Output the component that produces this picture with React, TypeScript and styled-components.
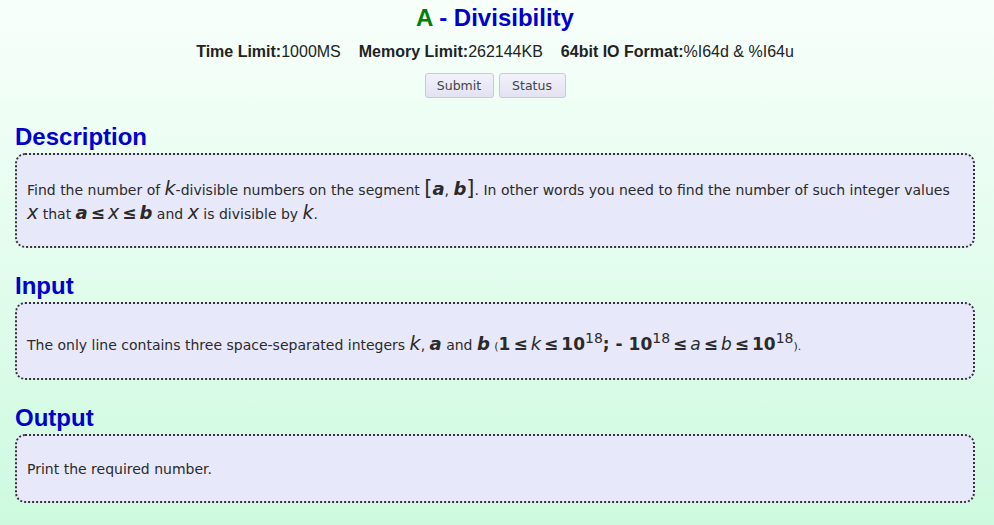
import React from 'react'
import styled, { createGlobalStyle } from 'styled-components'

const GlobalStyle = createGlobalStyle`
  html, body {
    margin: 0;
    padding: 0;
  }
  body {
    min-height: 525px;
    background: linear-gradient(to bottom, #f8fffb 0%, #cdfadf 100%);
    font-family: "DejaVu Sans", Verdana, sans-serif;
    color: #222;
  }
`

const Page = styled.div`
  padding: 0 19px 0 15px;
  min-height: 525px;
  box-sizing: border-box;
`

const Header = styled.div`
  text-align: center;
  padding-top: 4px;
`

const Title = styled.h1`
  margin: 0;
  font-family: "Liberation Sans", Arial, sans-serif;
  font-size: 24px;
  font-weight: bold;
  line-height: 28px;
  color: #0000cc;
`

const ProbId = styled.span`
  color: #008000;
`

const Limits = styled.div`
  margin-top: 11px;
  font-family: "Liberation Sans", Arial, sans-serif;
  font-size: 16px;
  line-height: 18px;
  color: #222;
  display: flex;
  justify-content: center;
  gap: 18px;
`

const Label = styled.b`
  color: #222;
`

const Buttons = styled.div`
  display: flex;
  justify-content: center;
  gap: 5px;
  margin-top: 12px;
`

const Button = styled.button<{ $w: number }>`
  width: ${p => p.$w}px;
  height: 25px;
  padding: 0;
  border: 1px solid #c9c9d6;
  border-radius: 3px;
  background: linear-gradient(to bottom, #f2f2fb, #e2e2f2);
  font-family: "DejaVu Sans", Verdana, sans-serif;
  font-size: 12.5px;
  color: #444;
`

const Section = styled.section`
  margin-top: 27px;
  & + & {
    margin-top: 26px;
  }
`

const Heading = styled.h2`
  margin: 0;
  font-family: "Liberation Sans", Arial, sans-serif;
  font-size: 24px;
  font-weight: bold;
  line-height: 24px;
  color: #0000cc;
`

const Panel = styled.div<{ $h: number; $pt?: number }>`
  box-sizing: border-box;
  height: ${p => p.$h}px;
  margin-top: 4px;
  border: 2px dotted #333;
  border-radius: 10px;
  background: #e8e8fb;
  padding: ${p => p.$pt ?? 0}px 10px 0;
  display: flex;
  align-items: center;
`

const Text = styled.p`
  margin: 0;
  font-size: 14px;
  line-height: 22px;
  color: #2a2a2a;
`

const Var = styled.i<{ $b?: boolean; $s?: number }>`
  font-family: "DejaVu Sans", Verdana, sans-serif;
  font-size: ${p => p.$s ?? 19}px;
  font-weight: ${p => (p.$b ? 'bold' : 'normal')};
`

const Bold = styled.b`
  font-size: 17px;
`

const Op = styled.b`
  font-size: 17px;
  margin: 0 3px;
`

const Sup = styled.sup`
  font-size: 14px;
  vertical-align: 7px;
  line-height: 0;
  font-weight: normal;
`

const Small = styled.span`
  font-size: 11px;
`

const Bracket = styled.span`
  font-size: 21px;
`

export default function App() {
  return (
    <>
      <GlobalStyle />
      <Page>
        <Header>
          <Title>
            <ProbId>A</ProbId> - Divisibility
          </Title>
          <Limits>
            <span>
              <Label>Time Limit:</Label>1000MS
            </span>
            <span>
              <Label>Memory Limit:</Label>262144KB
            </span>
            <span>
              <Label>64bit IO Format:</Label>%I64d &amp; %I64u
            </span>
          </Limits>
          <Buttons>
            <Button $w={69}>Submit</Button>
            <Button $w={67}>Status</Button>
          </Buttons>
        </Header>

        <Section>
          <Heading>Description</Heading>
          <Panel $h={95}>
            <Text>
              Find the number of <Var>k</Var>-divisible numbers on the segment{' '}
              <Bracket>[</Bracket>
              <Var $b $s={18}>a</Var>, <Var $b $s={18}>b</Var>
              <Bracket>]</Bracket>. In other words you need to find the number of such integer values{' '}
              <Var>x</Var> that <Var $b $s={18}>a</Var>
              <Op>≤</Op>
              <Var>x</Var>
              <Op>≤</Op>
              <Var $b $s={18}>b</Var> and <Var>x</Var> is divisible by <Var>k</Var>.
            </Text>
          </Panel>
        </Section>

        <Section>
          <Heading>Input</Heading>
          <Panel $h={78} $pt={8}>
            <Text>
              The only line contains three space-separated integers <Var>k</Var>,{' '}
              <Var $b $s={18}>a</Var> and <Var $b $s={18}>b</Var> <Small>(</Small>
              <Bold>1</Bold>
              <Op>≤</Op>
              <Var $s={18}>k</Var>
              <Op>≤</Op>
              <Bold>10</Bold>
              <Sup>18</Sup>
              <Bold>; - 10</Bold>
              <Sup>18</Sup>
              <Op>≤</Op>
              <Var $s={17}>a</Var>
              <Op>≤</Op>
              <Var $s={17}>b</Var>
              <Op>≤</Op>
              <Bold>10</Bold>
              <Sup>18</Sup>
              <Small>).</Small>
            </Text>
          </Panel>
        </Section>

        <Section>
          <Heading>Output</Heading>
          <Panel $h={69}>
            <Text>Print the required number.</Text>
          </Panel>
        </Section>
      </Page>
    </>
  )
}
